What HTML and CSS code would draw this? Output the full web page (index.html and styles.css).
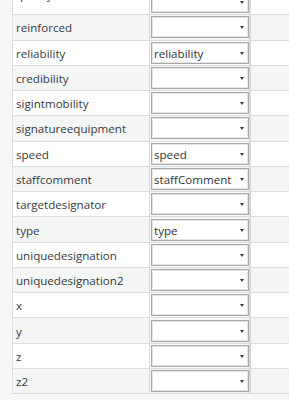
FILE: index.html
```html
<!DOCTYPE html>
<html>
<head>
<meta charset="utf-8">
<link rel="stylesheet" href="styles.css">
</head>
<body>
<div class="table">
  <div class="row odd first"><div class="name">quality</div><div class="val"><div class="dd"><span></span><i class="arrow"></i></div></div><div class="extra"></div></div>
  <div class="row even"><div class="name">reinforced</div><div class="val"><div class="dd"><span></span><i class="arrow"></i></div></div><div class="extra"></div></div>
  <div class="row odd"><div class="name">reliability</div><div class="val"><div class="dd"><span>reliability</span><i class="arrow"></i></div></div><div class="extra"></div></div>
  <div class="row even"><div class="name">credibility</div><div class="val"><div class="dd"><span></span><i class="arrow"></i></div></div><div class="extra"></div></div>
  <div class="row odd"><div class="name">sigintmobility</div><div class="val"><div class="dd"><span></span><i class="arrow"></i></div></div><div class="extra"></div></div>
  <div class="row even"><div class="name">signatureequipment</div><div class="val"><div class="dd"><span></span><i class="arrow"></i></div></div><div class="extra"></div></div>
  <div class="row odd"><div class="name">speed</div><div class="val"><div class="dd"><span>speed</span><i class="arrow"></i></div></div><div class="extra"></div></div>
  <div class="row even"><div class="name">staffcomment</div><div class="val"><div class="dd"><span>staffComment</span><i class="arrow"></i></div></div><div class="extra"></div></div>
  <div class="row odd"><div class="name">targetdesignator</div><div class="val"><div class="dd"><span></span><i class="arrow"></i></div></div><div class="extra"></div></div>
  <div class="row even"><div class="name">type</div><div class="val"><div class="dd"><span>type</span><i class="arrow"></i></div></div><div class="extra"></div></div>
  <div class="row odd"><div class="name">uniquedesignation</div><div class="val"><div class="dd"><span></span><i class="arrow"></i></div></div><div class="extra"></div></div>
  <div class="row even"><div class="name">uniquedesignation2</div><div class="val"><div class="dd"><span></span><i class="arrow"></i></div></div><div class="extra"></div></div>
  <div class="row odd"><div class="name">x</div><div class="val"><div class="dd"><span></span><i class="arrow"></i></div></div><div class="extra"></div></div>
  <div class="row even"><div class="name">y</div><div class="val"><div class="dd"><span></span><i class="arrow"></i></div></div><div class="extra"></div></div>
  <div class="row odd"><div class="name">z</div><div class="val"><div class="dd"><span></span><i class="arrow"></i></div></div><div class="extra"></div></div>
  <div class="row even"><div class="name">z2</div><div class="val"><div class="dd"><span></span><i class="arrow"></i></div></div><div class="extra"></div></div>
</div>
</body>
</html>
```
FILE: styles.css
```css
html, body {
  margin: 0;
  padding: 0;
  background: #f6f7f7;
  overflow: hidden;
}
body {
  width: 289px;
  height: 400px;
  font-family: "Open Sans", "Noto Sans", sans-serif;
  font-size: 11.6px;
  color: #363a3e;
}
.table {
  margin-left: 12px;
  margin-top: -17px;
  display: flex;
  flex-direction: column;
  border-left: 1px solid #dedede;
  border-bottom: 1px solid #d8d8d8;
  width: 277px;
}
.row {
  display: grid;
  grid-template-columns: 137px 101px 1fr;
  height: 25.27px;
  box-sizing: border-box;
  border-top: 1px solid #dcdcdc;
}
.row.first {
  height: 31.27px;
}
.row.odd { background: #ffffff; }
.row.even { background: #f4f5f5; }
.name {
  padding-left: 3px;
  padding-top: 1px;
  display: flex;
  align-items: center;
  white-space: nowrap;
  overflow: hidden;
  border-right: 1px solid #d9d9d9;
}
.row.first .name {
  padding-bottom: 10px;
}
.val {
  padding: 1px 0 1px 1px;
  display: flex;
  align-items: center;
  border-right: 2px solid #d9d9d9;
}
.row.first .val {
  align-items: flex-end;
}
.dd {
  flex: 1;
  height: 22px;
  box-sizing: border-box;
  background: #fff;
  border: 1px solid #a8a8a8;
  box-shadow: inset 0 0 0 1px #e4e4e4;
  display: flex;
  align-items: center;
  justify-content: space-between;
  padding: 1px 4px 0 2px;
}
.dd span {
  white-space: nowrap;
  color: #2f3236;
}
.arrow {
  width: 0;
  height: 0;
  border-left: 2.5px solid transparent;
  border-right: 2.5px solid transparent;
  border-top: 3px solid #3a3a3a;
}
```
